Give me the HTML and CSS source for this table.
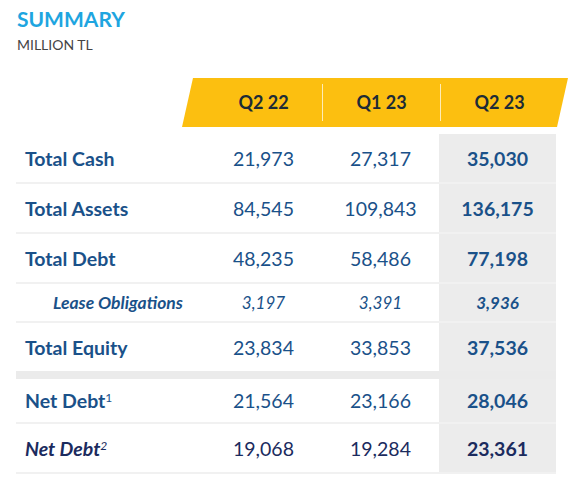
FILE: index.html
```html
<!DOCTYPE html>
<html lang="en">
<head>
  <meta charset="UTF-8" />
  <meta name="viewport" content="width=device-width, initial-scale=1.0" />
  <title>Summary</title>
  <link rel="stylesheet" href="styles.css">
</head>
<body>
  <!-- title -->
  <div class="title">
    <h1>SUMMARY</h1>
    <div class="unit">MILLION TL</div>
  </div>

  <!-- period header -->
  <div class="head">
    <div class="band">
      <div class="period">Q2 22</div>
      <div class="period">Q1 23</div>
      <div class="period">Q2 23</div>
    </div>
  </div>

  <!-- figures -->
  <div class="table">
    <div class="row">
      <div class="label">Total Cash</div>
      <div class="num">21,973</div>
      <div class="num">27,317</div>
      <div class="num hl">35,030</div>
    </div>
    <div class="row">
      <div class="label">Total Assets</div>
      <div class="num">84,545</div>
      <div class="num">109,843</div>
      <div class="num hl">136,175</div>
    </div>
    <div class="row">
      <div class="label">Total Debt</div>
      <div class="num">48,235</div>
      <div class="num">58,486</div>
      <div class="num hl">77,198</div>
    </div>
    <div class="row sub">
      <div class="label">Lease Obligations</div>
      <div class="num">3,197</div>
      <div class="num">3,391</div>
      <div class="num hl">3,936</div>
    </div>
    <div class="row eq">
      <div class="label">Total Equity</div>
      <div class="num">23,834</div>
      <div class="num">33,853</div>
      <div class="num hl">37,536</div>
    </div>
    <div class="row nd">
      <div class="label">Net Debt<sup>1</sup></div>
      <div class="num">21,564</div>
      <div class="num">23,166</div>
      <div class="num hl">28,046</div>
    </div>
    <div class="row nd2">
      <div class="label">Net Debt<sup>2</sup></div>
      <div class="num">19,068</div>
      <div class="num">19,284</div>
      <div class="num hl">23,361</div>
    </div>
  </div>
</body>
</html>
```

FILE: styles.css
```css
html, body {
  margin: 0;
  padding: 0;
  background: #fff;
  font-family: Lato, "Open Sans", sans-serif;
}

.title {
  padding: 8px 0 0 17px;
}
.title h1 {
  margin: 0;
  font-size: 21px;
  line-height: 22px;
  font-weight: 700;
  color: #1ea5e0;
}
.unit {
  margin-top: 7px;
  font-size: 14px;
  line-height: 16px;
  color: #444;
}

.head {
  margin-top: 25px;
  padding-left: 182px;
}
.band {
  width: 386px;
  height: 49px;
  background: #fcbf10;
  clip-path: polygon(11px 0, 100% 0, calc(100% - 11px) 100%, 0 100%);
  display: flex;
  align-items: center;
  padding-left: 23px;
  box-sizing: border-box;
}
.period {
  width: 117px;
  height: 37px;
  line-height: 37px;
  text-align: center;
  font-size: 18px;
  font-weight: 700;
  color: #1d2b36;
}
.period + .period {
  border-left: 1px solid rgba(255, 255, 255, 0.7);
}

.table {
  margin: 7px 0 0 16px;
  width: 540px;
}
.row {
  display: grid;
  grid-template-columns: 189px 117px 117px 117px;
  height: 50px;
  border-bottom: 2px solid #f1f1f1;
  box-sizing: border-box;
  color: #1a5189;
}
.label, .num {
  display: flex;
  align-items: center;
  font-size: 19.5px;
}
.label {
  padding-left: 9px;
  font-weight: 700;
}
.num {
  justify-content: center;
}
.num.hl {
  background: #ececec;
  font-weight: 700;
}

.row.sub {
  height: 39px;
}
.sub .label {
  padding-left: 37px;
  font-size: 17.5px;
  font-style: italic;
}
.sub .num {
  font-size: 17px;
  font-style: italic;
}

.row.eq {
  height: 56px;
  border-bottom: 8px solid #ebebeb;
}
.row.nd {
  height: 45px;
}
.row.nd2 {
  color: #1b2b5e;
}
.nd2 .label {
  font-style: italic;
}
sup {
  font-size: 12px;
  font-weight: 400;
  position: relative;
  top: -3px;
}
```
